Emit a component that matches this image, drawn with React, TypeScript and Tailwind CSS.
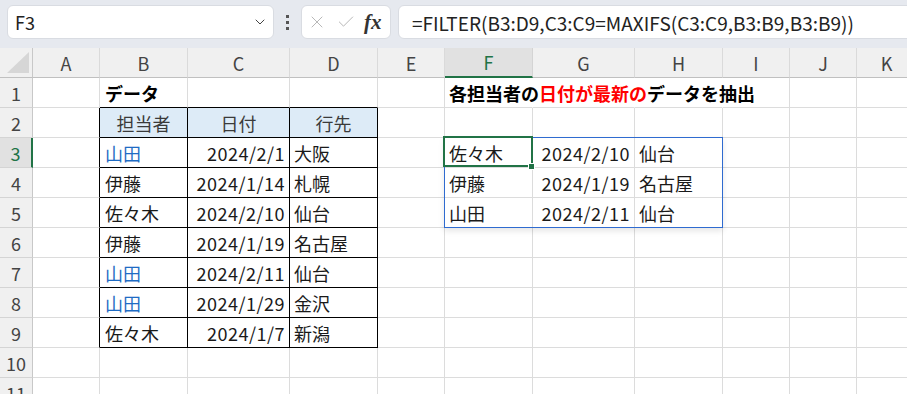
import React from "react";
import { ChevronDown, X, Check } from "lucide-react";

const COLS = ["A", "B", "C", "D", "E", "F", "G", "H", "I", "J", "K"];

// 元データ B3:D9
const data: string[][] = [
  ["山田", "2024/2/1", "大阪"],
  ["伊藤", "2024/1/14", "札幌"],
  ["佐々木", "2024/2/10", "仙台"],
  ["伊藤", "2024/1/19", "名古屋"],
  ["山田", "2024/2/11", "仙台"],
  ["山田", "2024/1/29", "金沢"],
  ["佐々木", "2024/1/7", "新潟"],
];

// FILTER の結果 F3:H5
const result: string[][] = [
  ["佐々木", "2024/2/10", "仙台"],
  ["伊藤", "2024/1/19", "名古屋"],
  ["山田", "2024/2/11", "仙台"],
];

const inTable = (r: number, c: number) => c >= 1 && c <= 3 && r >= 2 && r <= 9;

function cellContent(r: number, c: number): React.ReactNode {
  if (r === 1 && c === 1) return <span className="pl-[5px] font-bold text-black">データ</span>;
  if (r === 1 && c === 5)
    return (
      <span className="pl-[4px] font-bold text-black whitespace-nowrap">
        各担当者の<span className="text-[#ff0000]">日付が最新の</span>データを抽出
      </span>
    );
  if (r === 2 && c >= 1 && c <= 3) {
    return <span className="w-full text-center text-[#3a3a3a]">{["担当者", "日付", "行先"][c - 1]}</span>;
  }
  if (r >= 3 && r <= 9 && c >= 1 && c <= 3) {
    const v = data[r - 3][c - 1];
    if (c === 2) return <span className="w-full text-right pr-[4px] tracking-[0.5px] text-[#1a1a1a]">{v}</span>;
    if (c === 1)
      return (
        <span className={v === "山田" ? "pl-[5px] text-[#1f6cc4]" : "pl-[5px] text-[#1a1a1a]"}>{v}</span>
      );
    return <span className="pl-[4px] text-[#1a1a1a] whitespace-nowrap">{v}</span>;
  }
  if (r >= 3 && r <= 5 && c >= 5 && c <= 7) {
    const v = result[r - 3][c - 5];
    if (c === 6) return <span className="w-full text-right pr-[4px] tracking-[0.5px] text-[#1a1a1a]">{v}</span>;
    return <span className="pl-[4px] text-[#1a1a1a] whitespace-nowrap">{v}</span>;
  }
  return null;
}

function Cell({ r, c }: { r: number; c: number }) {
  const blackRight = inTable(r, c) || (c === 0 && r >= 2 && r <= 9);
  const hideRight = r === 1 && c >= 5 && c <= 7;
  const blackBottom = c >= 1 && c <= 3 && r >= 1 && r <= 9;
  const right = blackRight ? "border-r-black" : hideRight ? "border-r-transparent" : "border-r-[#dcdcdc]";
  const bottom = blackBottom ? "border-b-black" : "border-b-[#dcdcdc]";
  const bg = r === 2 && c >= 1 && c <= 3 ? "bg-[#ddebf7]" : "";
  const isF3 = r === 3 && c === 5;

  return (
    <div className={`relative flex items-center h-[30px] min-w-0 border-r border-b ${right} ${bottom} ${bg}`}>
      {cellContent(r, c)}
      {isF3 && (
        <>
          {/* スピル範囲 */}
          <div className="absolute z-10 -left-[1px] -top-[1px] w-[279px] h-[91px] border border-[#2f6bd0] shadow-[0_3px_6px_rgba(0,0,0,0.1)] pointer-events-none" />
          {/* アクティブセル */}
          <div className="absolute z-20 -left-[2px] -top-[2px] w-[90px] h-[31px] border-2 border-[#217346] pointer-events-none" />
          <div className="absolute z-20 -right-[3px] -bottom-[3px] w-[7px] h-[7px] bg-[#217346] border border-white pointer-events-none" />
        </>
      )}
    </div>
  );
}

export default function App() {
  const rows = Array.from({ length: 11 }, (_, i) => i + 1);

  return (
    <div className="w-[907px] h-[394px] overflow-hidden bg-white font-['Noto_Sans_CJK_JP',sans-serif] text-[18px] leading-none">
      {/* 数式バー */}
      <div className="h-[48px] bg-[#e6e9ef] flex items-start pt-[5px] pl-[7px]">
        <div className="w-[267px] h-[34px] shrink-0 bg-white rounded-[6px] border border-[#d9dce2] flex items-center pl-[7px] pr-[5px]">
          <span className="text-[#222]">F3</span>
          <ChevronDown className="ml-auto w-[16px] h-[16px] text-[#444]" strokeWidth={1.5} />
        </div>
        <div className="w-[27px] h-[34px] shrink-0 flex flex-col items-center justify-center gap-[3px]">
          <span className="w-[3px] h-[3px] bg-[#555]" />
          <span className="w-[3px] h-[3px] bg-[#555]" />
          <span className="w-[3px] h-[3px] bg-[#555]" />
        </div>
        <div className="w-[90px] h-[34px] shrink-0 bg-white rounded-[6px] border border-[#d9dce2] flex items-center pl-[5px]">
          <X className="w-[20px] h-[20px] text-[#b8b8b8]" strokeWidth={1.2} />
          <Check className="ml-[9px] w-[20px] h-[20px] text-[#b8b8b8]" strokeWidth={1.2} />
          <span className="ml-[8px] font-['Liberation_Serif',serif] italic font-bold text-[21px] text-[#333]">fx</span>
        </div>
        <div className="ml-[7px] w-[560px] h-[34px] shrink-0 bg-white rounded-l-[6px] border border-[#d9dce2] flex items-center pl-[13px] text-[19px] text-[#222] whitespace-nowrap">
          =FILTER(B3:D9,C3:C9=MAXIFS(C3:C9,B3:B9,B3:B9))
        </div>
      </div>

      {/* シート */}
      <div className="grid grid-cols-[33px_67px_88px_102px_88px_67px_88px_102px_88px_67px_67px_60px] auto-rows-[30px]">
        <div className="relative h-[30px] bg-[#f0f0f0] border-r border-b border-r-[#c8c8c8] border-b-[#c0c0c0]">
          <svg className="absolute right-[3px] bottom-[4px]" width="22" height="21" viewBox="0 0 22 21">
            <polygon points="22,0 22,21 0,21" fill="#d6d6d6" />
          </svg>
        </div>
        {COLS.map((col) =>
          col === "F" ? (
            <div
              key={col}
              className="h-[30px] flex items-center justify-center bg-[#e1e1e1] border-r border-r-[#d4d4d4] border-b-2 border-b-[#217346] text-[#217346]"
            >
              {col}
            </div>
          ) : (
            <div
              key={col}
              className="h-[30px] flex items-center justify-center bg-[#f0f0f0] border-r border-b border-r-[#dadada] border-b-[#c0c0c0] text-[#444]"
            >
              {col}
            </div>
          )
        )}

        {rows.map((r) => (
          <React.Fragment key={r}>
            {r === 3 ? (
              <div className="h-[30px] flex items-center justify-center bg-[#e1e1e1] border-r-2 border-b border-r-[#217346] border-b-[#d4d4d4] text-[#217346]">
                {r}
              </div>
            ) : (
              <div className="h-[30px] flex items-center justify-center bg-[#f0f0f0] border-r border-b border-r-[#c8c8c8] border-b-[#d4d4d4] text-[#444]">
                {r}
              </div>
            )}
            {COLS.map((_, c) => (
              <Cell key={c} r={r} c={c} />
            ))}
          </React.Fragment>
        ))}
      </div>
    </div>
  );
}
